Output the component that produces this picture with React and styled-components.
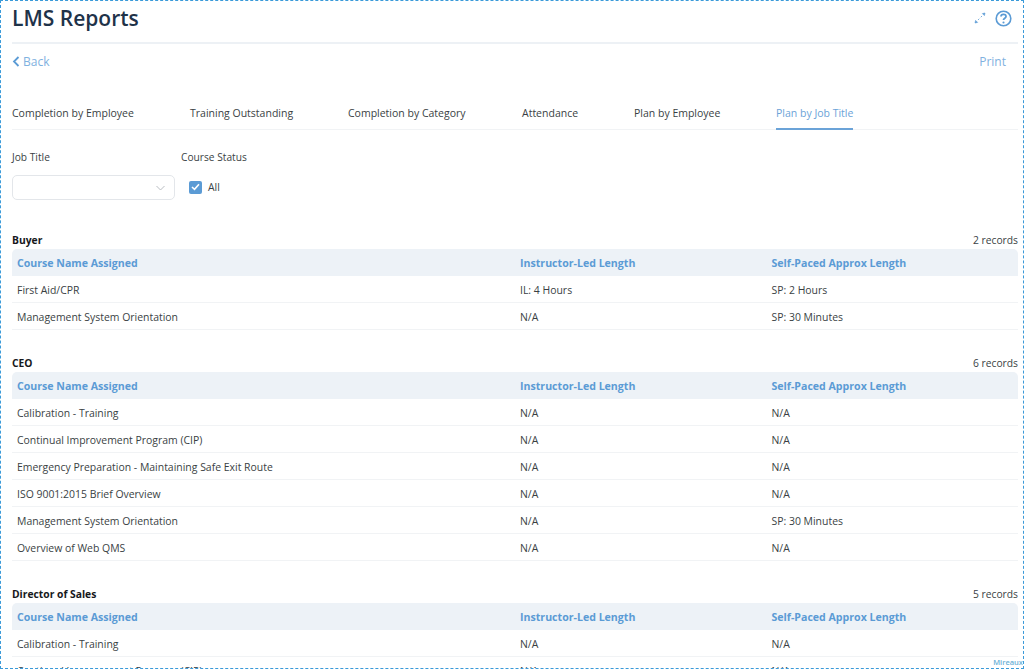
import React from "react";
import styled, { createGlobalStyle } from "styled-components";

const Global = createGlobalStyle`
  html, body { margin: 0; padding: 0; background: #fff; }
  body { font-family: "Open Sans", "Noto Sans", sans-serif; color: #3a3f44; }
  * { box-sizing: border-box; }
`;

const Frame = styled.div`
  position: relative;
  height: 669px;
  overflow: hidden;
  border: 1px dashed #3a9ad9;
  padding: 0 5px 0 11px;
`;
const Header = styled.div`
  display: flex;
  align-items: center;
  justify-content: space-between;
  height: 43px;
  padding-bottom: 7px;
  border-bottom: 2px solid #edf1f5;
`;
const Title = styled.h1`
  margin: 0;
  font-size: 21px;
  font-weight: 600;
  color: #1f3349;
  line-height: 36px;
`;
const HeaderIcons = styled.div`
  display: flex;
  align-items: center;
  gap: 9px;
  margin-right: 6px;
`;
const ActionBar = styled.div`
  display: flex;
  justify-content: space-between;
  align-items: center;
  height: 34px;
  padding-right: 12px;
  font-size: 12px;
  color: #7fb1e0;
`;
const BackLink = styled.span`
  display: flex;
  align-items: center;
  gap: 3px;
`;
const Tabs = styled.div`
  display: grid;
  grid-template-columns: 178px 158px 174px 112px 142px auto;
  justify-items: start;
  height: 52px;
  padding-top: 25px;
  border-bottom: 1px solid #f1f3f5;
`;
const Tab = styled.div`
  height: 27px;
  line-height: 20px;
  font-size: 10.5px;
  color: ${({ $active }) => ($active ? "#6ba3d8" : "#3a3f44")};
  border-bottom: ${({ $active }) => ($active ? "2px solid #6ba3d8" : "none")};
`;
const Filters = styled.div`
  display: flex;
  gap: 6px;
  margin-top: 18px;
`;
const FieldLabel = styled.div`
  font-size: 10.2px;
  line-height: 18px;
  color: #3a3f44;
`;
const JobField = styled.div`
  width: 163px;
`;
const SelectBox = styled.div`
  display: flex;
  align-items: center;
  justify-content: flex-end;
  height: 25px;
  margin-top: 9px;
  padding-right: 9px;
  border: 1px solid #e3e6ea;
  border-radius: 5px;
`;
const CheckRow = styled.div`
  display: flex;
  align-items: center;
  gap: 6px;
  margin: 11px 0 0 8px;
  font-size: 10.4px;
  line-height: 20px;
`;
const CheckBox = styled.span`
  display: flex;
  align-items: center;
  justify-content: center;
  width: 13px;
  height: 13px;
  border-radius: 2px;
  background: #5b9bd5;
`;
const Section = styled.section`
  margin-top: ${({ $first }) => ($first ? "31px" : "24px")};
`;
const SectionHead = styled.div`
  display: flex;
  justify-content: space-between;
  align-items: center;
  height: 18px;
  font-size: 10.3px;
`;
const GroupName = styled.span`
  font-weight: 700;
  color: #16181b;
`;
const Records = styled.span`
  color: #3a3f44;
`;
const Row = styled.div`
  display: grid;
  grid-template-columns: 2fr 1fr 1fr;
  align-items: center;
  height: 27px;
  padding-top: ${({ $head }) => ($head ? "0" : "2px")};
  font-size: ${({ $head }) => ($head ? "10.6px" : "10.45px")};
  background: ${({ $head }) => ($head ? "#edf2f7" : "#fff")};
  border-bottom: ${({ $head }) => ($head ? "none" : "1px solid #f1f3f5")};
  border-radius: ${({ $head }) => ($head ? "5px 5px 0 0" : "0")};
  font-weight: ${({ $head }) => ($head ? 700 : 400)};
  color: ${({ $head }) => ($head ? "#5b9bd5" : "#3a3f44")};
`;
const Cell = styled.div`
  padding-left: 5px;
  white-space: nowrap;
`;
const Credit = styled.div`
  position: absolute;
  right: 0;
  bottom: 1px;
  font-size: 7.5px;
  font-weight: 600;
  line-height: 9px;
  color: #6cb0d6;
`;

const TABS = [
  "Completion by Employee",
  "Training Outstanding",
  "Completion by Category",
  "Attendance",
  "Plan by Employee",
  "Plan by Job Title",
];

const NA = "N/A";
const SP30 = "SP: 30 Minutes";

const GROUPS = [
  {
    name: "Buyer",
    records: "2 records",
    rows: [
      ["First Aid/CPR", "IL: 4 Hours", "SP: 2 Hours"],
      ["Management System Orientation", NA, SP30],
    ],
  },
  {
    name: "CEO",
    records: "6 records",
    rows: [
      ["Calibration - Training", NA, NA],
      ["Continual Improvement Program (CIP)", NA, NA],
      ["Emergency Preparation - Maintaining Safe Exit Route", NA, NA],
      ["ISO 9001:2015 Brief Overview", NA, NA],
      ["Management System Orientation", NA, SP30],
      ["Overview of Web QMS", NA, NA],
    ],
  },
  {
    name: "Director of Sales",
    records: "5 records",
    rows: [
      ["Calibration - Training", NA, NA],
      ["Continual Improvement Program (CIP)", NA, NA],
    ],
  },
];

const ExpandIcon = () => (
  <svg width="12" height="12" viewBox="0 0 12 12" fill="#5b9bd5" stroke="#5b9bd5">
    <path d="M4.2 7.8 L5.2 6.8" strokeWidth="1" />
    <path d="M6.8 5.2 L7.8 4.2" strokeWidth="1" />
    <path d="M11 1 L8.4 1.6 L10.4 3.6 Z" strokeWidth="0.6" />
    <path d="M1 11 L3.6 10.4 L1.6 8.4 Z" strokeWidth="0.6" />
  </svg>
);

const HelpIcon = () => (
  <svg width="17" height="17" viewBox="0 0 17 17" fill="none" stroke="#5b9bd5">
    <circle cx="8.5" cy="8.5" r="7.3" strokeWidth="1.6" />
    <path d="M6 6.6 C6 3.6 11 3.6 11 6.4 C11 8.2 8.5 8.2 8.5 10" strokeWidth="1.8" />
    <circle cx="8.5" cy="12.5" r="1.05" fill="#5b9bd5" stroke="none" />
  </svg>
);

const BackIcon = () => (
  <svg width="8" height="11" viewBox="0 0 8 11" fill="none" stroke="#5b9bd5" strokeWidth="1.8">
    <path d="M6.5 1 L2 5.5 L6.5 10" />
  </svg>
);

const ChevronIcon = () => (
  <svg width="9" height="6" viewBox="0 0 9 6" fill="none" stroke="#b9bdc2" strokeWidth="1">
    <path d="M0.5 1 L4.5 5 L8.5 1" />
  </svg>
);

const CheckIcon = () => (
  <svg width="9" height="8" viewBox="0 0 9 8" fill="none" stroke="#fff" strokeWidth="1.6">
    <path d="M1 4 L3.5 6.3 L8 1.2" />
  </svg>
);

const App = () => (
  <Frame>
    <Global />
    <Header>
      <Title>LMS Reports</Title>
      <HeaderIcons>
        <ExpandIcon />
        <HelpIcon />
      </HeaderIcons>
    </Header>
    <ActionBar>
      <BackLink>
        <BackIcon />
        Back
      </BackLink>
      <span>Print</span>
    </ActionBar>
    <Tabs>
      {TABS.map((t) => (
        <Tab key={t} $active={t === "Plan by Job Title"}>
          {t}
        </Tab>
      ))}
    </Tabs>
    <Filters>
      <JobField>
        <FieldLabel>Job Title</FieldLabel>
        <SelectBox>
          <ChevronIcon />
        </SelectBox>
      </JobField>
      <div>
        <FieldLabel>Course Status</FieldLabel>
        <CheckRow>
          <CheckBox>
            <CheckIcon />
          </CheckBox>
          All
        </CheckRow>
      </div>
    </Filters>
    {GROUPS.map((g, i) => (
      <Section key={g.name} $first={i === 0}>
        <SectionHead>
          <GroupName>{g.name}</GroupName>
          <Records>{g.records}</Records>
        </SectionHead>
        <Row $head>
          <Cell>Course Name Assigned</Cell>
          <Cell>Instructor-Led Length</Cell>
          <Cell>Self-Paced Approx Length</Cell>
        </Row>
        {g.rows.map((r, j) => (
          <Row key={j}>
            {r.map((c, k) => (
              <Cell key={k}>{c}</Cell>
            ))}
          </Row>
        ))}
      </Section>
    ))}
    <Credit>Mireaux</Credit>
  </Frame>
);

export default App;
